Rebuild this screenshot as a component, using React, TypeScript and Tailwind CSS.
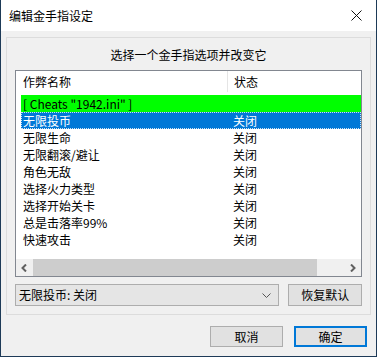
const FONT = { fontFamily: '"Noto Sans CJK SC", "Noto Sans", sans-serif' };

const rows = [
  '无限生命',
  '无限翻滚/避让',
  '角色无敌',
  '选择火力类型',
  '选择开始关卡',
  '总是击落率99%',
  '快速攻击',
];

export default function App() {
  return (
    <div
      className="w-[377px] h-[357px] flex flex-col border-x border-b border-[#1d3a57] text-[12px] text-black bg-[#f0f0f0]"
      style={FONT}
    >
      {/* 标题栏 */}
      <div className="h-[31px] bg-white flex items-center justify-between pl-[8px] pr-[14px] shrink-0">
        <span className="leading-none">编辑金手指设定</span>
        <svg width="11" height="11" viewBox="0 0 11 11">
          <path d="M0.5 0.5L10.5 10.5M10.5 0.5L0.5 10.5" stroke="#111" strokeWidth="1" />
        </svg>
      </div>

      <div className="flex-1 flex flex-col px-[5px] pt-[6px]">
        {/* 分组框 */}
        <div className="h-[278px] border border-[#dcdcdc] flex flex-col px-[8px]">
          <div className="h-[32px] flex items-center justify-center pt-[2px]">选择一个金手指选项并改变它</div>

          {/* 列表 */}
          <div className="h-[207px] border border-[#828790] bg-white flex flex-col">
            <div className="h-[24px] flex items-stretch">
              <div className="w-[212px] pl-[7px] flex items-center border-r border-[#e5e5e5] mb-[3px]">作弊名称</div>
              <div className="pl-[6px] flex items-center mb-[3px]">状态</div>
            </div>
            <div className="ml-[5px] flex flex-col">
              <div className="h-[17px] bg-[#00ff00] flex items-center pl-[2px]">[ Cheats "1942.ini" ]</div>
              <div className="h-[17px] bg-[#0078d7] text-white flex items-center outline-1 outline-dotted outline-[#cfe3f5] -outline-offset-1">
                <span className="w-[212px] pl-[2px]">无限投币</span>
                <span>关闭</span>
              </div>
              {rows.map((r) => (
                <div key={r} className="h-[17px] flex items-center">
                  <span className="w-[212px] pl-[2px]">{r}</span>
                  <span>关闭</span>
                </div>
              ))}
            </div>
            <div className="flex-1" />
            {/* 横向滚动条 */}
            <div className="h-[17px] bg-[#f0f0f0] flex items-stretch">
              <div className="w-[17px] flex items-center justify-center">
                <svg width="7" height="8" viewBox="0 0 7 8">
                  <path d="M5 0.5L1.5 4L5 7.5" stroke="#606060" strokeWidth="2" fill="none" />
                </svg>
              </div>
              <div className="w-[284px] bg-[#cdcdcd]" />
              <div className="flex-1" />
              <div className="w-[17px] flex items-center justify-center">
                <svg width="7" height="8" viewBox="0 0 7 8">
                  <path d="M2 0.5L5.5 4L2 7.5" stroke="#606060" strokeWidth="2" fill="none" />
                </svg>
              </div>
            </div>
          </div>

          {/* 下拉框与按钮 */}
          <div className="flex items-center gap-[9px] mt-[7px]">
            <div className="w-[266px] h-[22px] border border-[#adadad] bg-[#e5e5e5] flex items-center justify-between pl-[3px] pr-[7px]">
              <span>无限投币: 关闭</span>
              <svg width="9" height="5" viewBox="0 0 9 5">
                <path d="M0.5 0.5L4.5 4.5L8.5 0.5" stroke="#555" strokeWidth="1" fill="none" />
              </svg>
            </div>
            <div className="w-[74px] h-[22px] border border-[#adadad] bg-[#e1e1e1] flex items-center justify-center">恢复默认</div>
          </div>
        </div>

        {/* 底部按钮 */}
        <div className="flex justify-end gap-[11px] mt-[11px] pr-[4px]">
          <div className="w-[73px] h-[21px] border border-[#adadad] bg-[#e1e1e1] flex items-center justify-center">取消</div>
          <div className="w-[73px] h-[21px] border-2 border-[#0078d7] bg-[#e1e1e1] flex items-center justify-center">确定</div>
        </div>
      </div>
    </div>
  );
}
